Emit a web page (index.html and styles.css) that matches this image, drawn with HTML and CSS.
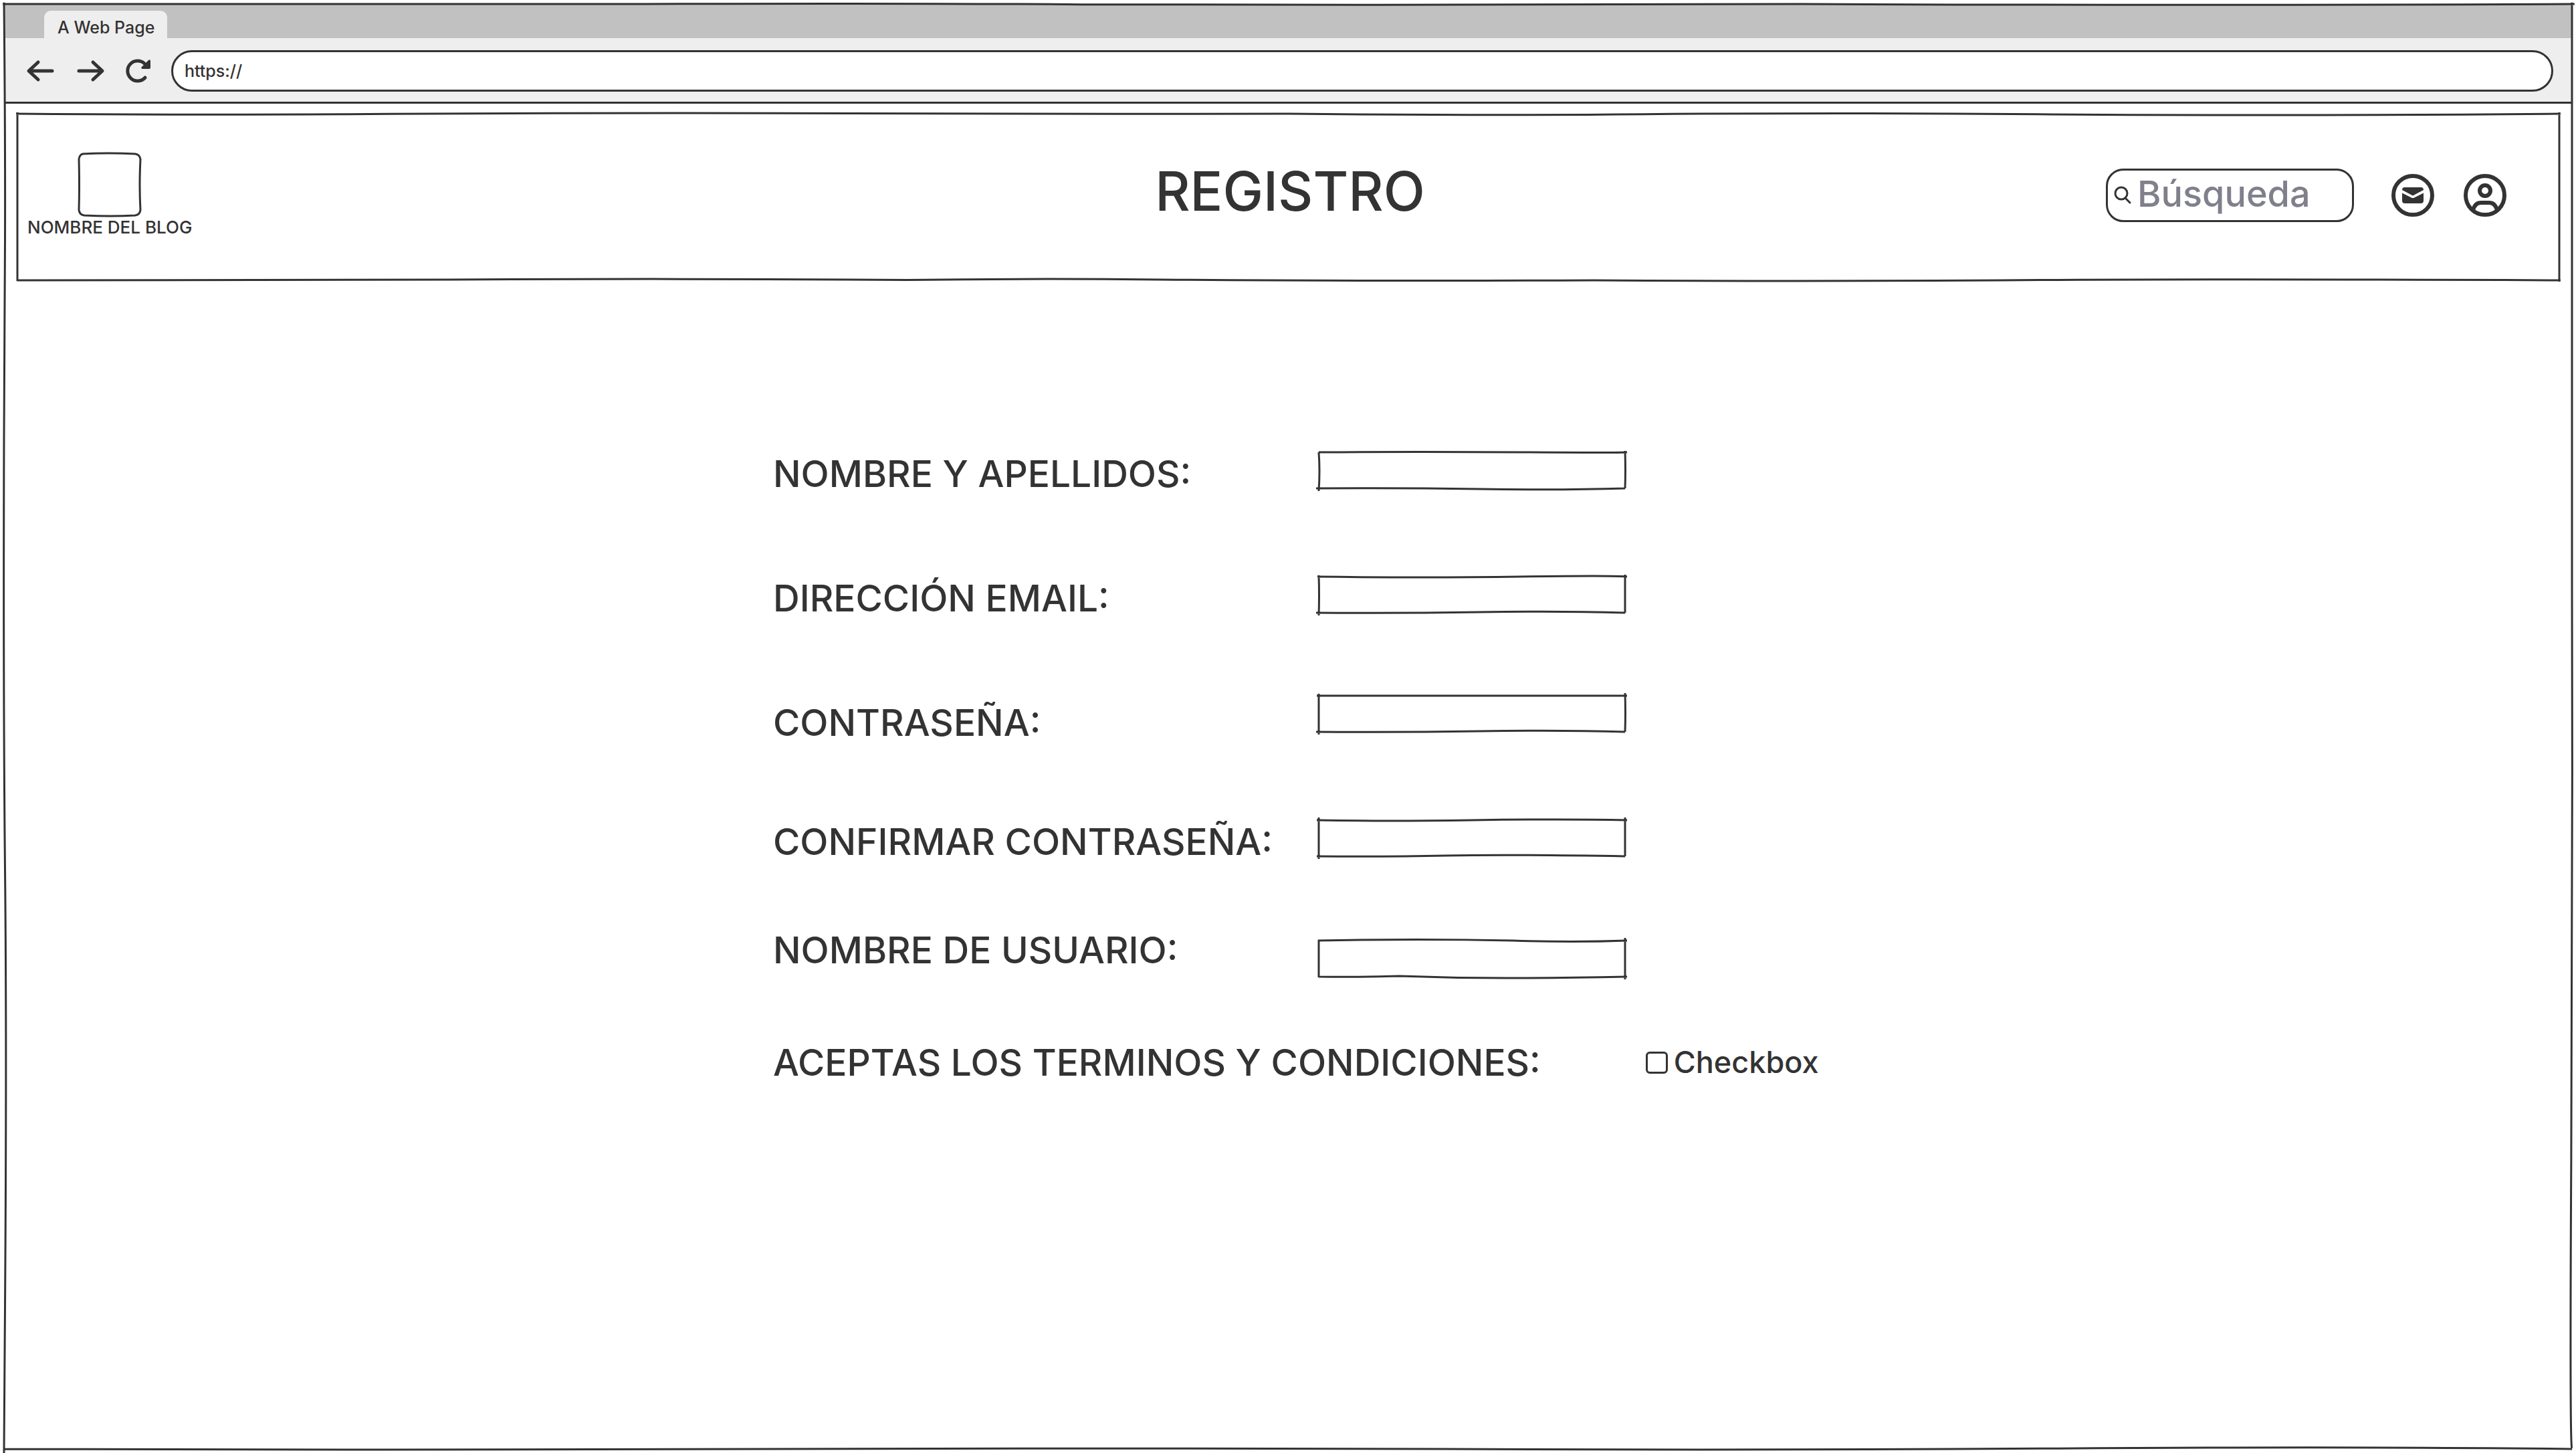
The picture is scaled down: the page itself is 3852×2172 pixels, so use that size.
FILE: index.html
```html
<!DOCTYPE html>
<html lang="es">
<head>
<meta charset="utf-8">
<title>Registro</title>
<link rel="stylesheet" href="styles.css">
</head>
<body>
<div class="window">
  <svg class="sketch" viewBox="0 0 1000 1000" preserveAspectRatio="none" aria-hidden="true"><path d="M-.5 0Q120 .6 250 0Q340-.7 420 .3Q560 1 700 0Q850 1.200 1001 0M0-1Q.5 90 .4 160T0 300Q-.3 480 .4 600T.4 900T0 1000M1000-1Q999.500 200 1000 400Q1000.300 600 999.700 800T1000 1000M0 1000Q150 1001 300 1000Q430 999.200 560 1000Q680 1001 800 999.600T1000 1000"/></svg>
  <div class="tabs"><div class="tab">A Web Page</div></div>
  <div class="toolbar">
    <button class="tool" type="button" aria-label="Atrás"><svg width="40" height="32" viewBox="0 0 40 32"><path class="line" d="M38 16H4M17 3L3 16L17 29"/></svg></button>
    <button class="tool" type="button" aria-label="Adelante"><svg width="40" height="32" viewBox="0 0 40 32"><path class="line" d="M4 16H38M25 3L39 16L25 29"/></svg></button>
    <button class="tool" type="button" aria-label="Recargar"><svg width="34" height="36" viewBox="0 0 34 36"><path class="line" d="M29 28A15 15 0 1 1 28 7"/><path d="M37 3V13Q37 15 35 15H25Q22 14 24 12L34 2Q36 0 37 3Z"/></svg></button>
    <input class="address" type="text" aria-label="Dirección web" value="https://">
  </div>
  <header class="header">
    <svg class="sketch" viewBox="0 0 1000 1000" preserveAspectRatio="none" aria-hidden="true"><path d="M-.5 0Q60 8 130 3Q220-6 300-3Q400 3 500 0Q580 12 640 3Q720-8 800 4Q900 14 1000.500 0M0-8V1005M1000-8V1008M0 1000Q100 1003 170 996Q260 988 350 998Q400 988 450 996Q540 1006 620 1000Q700 1008 780 1000Q860 990 1000.500 1000"/></svg>
    <a class="brand" href="#"><svg width="96" height="96" viewBox="0 0 96 96" aria-hidden="true"><path class="thin" d="M8 2Q46 0 86 2Q93 3 94 10Q92 50 94 86Q93 93 86 94Q50 96 10 94Q3 93 2 86Q3 50 2 10Q3 3 8 2Z"/></svg><span>NOMBRE DEL BLOG</span></a>
    <h1 class="title">REGISTRO</h1>
    <div class="actions">
      <label class="search"><svg width="28" height="28" viewBox="0 0 28 28" aria-hidden="true"><circle class="thin" cx="12" cy="11" r="9"/><path class="thin" d="M18 18L25 25"/></svg><input type="search" aria-label="Búsqueda" placeholder="Búsqueda"></label>
      <button class="round" type="button" aria-label="Mensajes"><svg width="64" height="64" viewBox="0 0 64 64"><circle class="ring" cx="32" cy="32" r="29"/><path d="M20 20H44Q48 20 48 24V24L32 32.500L16 24V24Q16 20 20 20ZM16 28.500L30 35.500Q32 36.500 34 35.500L48 28.500V40Q48 44 44 44H20Q16 44 16 40Z"/></svg></button>
      <button class="round" type="button" aria-label="Mi cuenta"><svg width="64" height="64" viewBox="0 0 64 64"><circle class="ring" cx="32" cy="32" r="29"/><circle class="ring" cx="32" cy="25" r="8"/><path class="ring" d="M14 54Q17 43 26 43H38Q47 43 50 54"/></svg></button>
    </div>
  </header>
  <main class="content">
    <form class="form">
      <label for="nombre">NOMBRE Y APELLIDOS:</label>
      <div class="box"><svg class="sketch" viewBox="0 0 458 54" preserveAspectRatio="none" aria-hidden="true"><path d="M0 0Q150-1 300 0T461 0M0 0Q2 27 0 58M458-2Q459 27 458 54M-4 54Q120 53 240 55T458 54"/></svg><input id="nombre" type="text"></div>
      <label for="email">DIRECCIÓN EMAIL:</label>
      <div class="box"><svg class="sketch" viewBox="0 0 458 54" preserveAspectRatio="none" aria-hidden="true"><path d="M-2 0Q160 2 300 0T461 0M0-2Q1 27 0 58M458-3V54M-4 54Q120 55 240 53T458 54"/></svg><input id="email" type="email"></div>
      <label for="clave" class="low-label">CONTRASEÑA:</label>
      <div class="box"><svg class="sketch" viewBox="0 0 458 54" preserveAspectRatio="none" aria-hidden="true"><path d="M-3 0H461M0-3V58M458-4Q459 27 458 54M-4 54Q120 55 240 53T458 54"/></svg><input id="clave" type="password"></div>
      <label for="clave2">CONFIRMAR CONTRASEÑA:</label>
      <div class="box"><svg class="sketch" viewBox="0 0 458 54" preserveAspectRatio="none" aria-hidden="true"><path d="M-3 0Q100 2 230 0T461 0M0-4V58M458-4V54M-3 54Q100 55 190 53T458 54"/></svg><input id="clave2" type="password"></div>
      <label for="usuario" class="high-label">NOMBRE DE USUARIO:</label>
      <div class="box low-box"><svg class="sketch" viewBox="0 0 458 54" preserveAspectRatio="none" aria-hidden="true"><path d="M-1 0Q150-3 290 0Q380 3 461 0M0-1V55M458-4V58M0 54Q60 55 120 53Q200 56 280 56T461 54"/></svg><input id="usuario" type="text"></div>
      <div class="terms">
        <span id="terminos">ACEPTAS LOS TERMINOS Y CONDICIONES:</span>
        <label class="check"><input type="checkbox" aria-describedby="terminos">Checkbox</label>
      </div>
    </form>
  </main>
</div>
</body>
</html>
```
FILE: styles.css
```css
:root {
  --ink: #333;
  --hint: #80808c;
}

* {
  box-sizing: border-box;
}

body {
  margin: 0;
  padding: 6px;
  min-height: 100vh;
  display: flex;
  background: #fff;
  color: var(--ink);
  font: 500 25px/32px Inter, "Liberation Sans", sans-serif;
}

button,
input {
  margin: 0;
  padding: 0;
  border: 0;
  background: none;
  color: inherit;
  font: inherit;
  outline: 0;
}

svg {
  display: block;
  flex: none;
  overflow: visible;
  fill: var(--ink);
}

.line,
.thin,
.ring {
  fill: none;
  stroke: var(--ink);
  stroke-width: 5;
  stroke-linecap: round;
  stroke-linejoin: round;
}

.thin {
  stroke-width: 3;
}

.ring {
  stroke-width: 6;
}

/* Hand-drawn outline laid over its container */
.sketch {
  position: absolute;
  inset: 0;
  width: 100%;
  height: 100%;
  fill: none;
  stroke: var(--ink);
  stroke-width: 3;
  pointer-events: none;
}

.sketch path {
  vector-effect: non-scaling-stroke;
}

.window {
  position: relative;
  flex: 1;
  display: flex;
  flex-direction: column;
}

.window > .sketch {
  z-index: 1;
}

.tabs {
  padding: 10px 60px 0;
  display: flex;
  background: #c1c1c1;
}

.tab {
  padding: 9px 20px 0;
  height: 41px;
  width: 184px;
  border-radius: 10px 10px 0 0;
  background: #eee;
  white-space: nowrap;
}

.toolbar {
  padding: 18px 28px 15px 34px;
  display: flex;
  align-items: center;
  gap: 34px;
  border-bottom: 3px solid var(--ink);
  background: #eee;
}

.address {
  flex: 1;
  height: 62px;
  padding: 0 17px;
  border: 3px solid var(--ink);
  border-radius: 31px;
  background: #fff;
}

.header {
  position: relative;
  margin: 15px 19px 0 20px;
  padding: 0 10px 6px 15px;
  height: 249px;
  display: grid;
  grid-template-columns: 1fr auto 1fr;
  align-items: center;
}

.brand {
  justify-self: start;
  display: flex;
  flex-direction: column;
  align-items: center;
  color: inherit;
  font-size: 26px;
  text-decoration: none;
}

.title {
  margin: 0;
  padding-bottom: 12px;
  font-size: 81px;
  font-weight: 500;
  line-height: 96px;
}

.actions {
  justify-self: end;
  padding-right: 69px;
  display: flex;
  align-items: center;
}

.search {
  width: 371px;
  height: 80px;
  margin-right: 12px;
  padding-left: 8px;
  display: flex;
  align-items: center;
  gap: 8px;
  border: 3px solid var(--ink);
  border-radius: 26px;
}

.search input {
  flex: 1;
  min-width: 0;
  padding-bottom: 4px;
  font-size: 54px;
  line-height: 64px;
}

.search input::placeholder {
  color: var(--hint);
  opacity: 1;
}

.round {
  margin-left: 44px;
}

.content {
  flex: 1;
  padding: 257px 0 80px calc(30% - 2px);
}

.form {
  display: grid;
  grid-template-columns: 816px 458px;
  grid-template-rows: 186px 178px 186px 166px 168px auto;
  align-items: start;
  font-size: 55px;
  line-height: 56px;
}

.form > label {
  padding-top: 4px;
}

.form > .low-label {
  padding-top: 12px;
}

.form > .high-label {
  padding-top: 0;
}

.box {
  position: relative;
  height: 54px;
}

.low-box {
  margin-top: 14px;
}

.box input {
  width: 100%;
  height: 100%;
  padding: 0 12px;
}

.terms {
  grid-column: 1 / -1;
  display: flex;
  align-items: center;
  gap: 157px;
  white-space: nowrap;
}

.check {
  display: flex;
  align-items: center;
  gap: 9px;
  font-size: 45px;
}

.check input {
  appearance: none;
  width: 33px;
  height: 33px;
  border: 3px solid var(--ink);
  border-radius: 6px;
}
```
